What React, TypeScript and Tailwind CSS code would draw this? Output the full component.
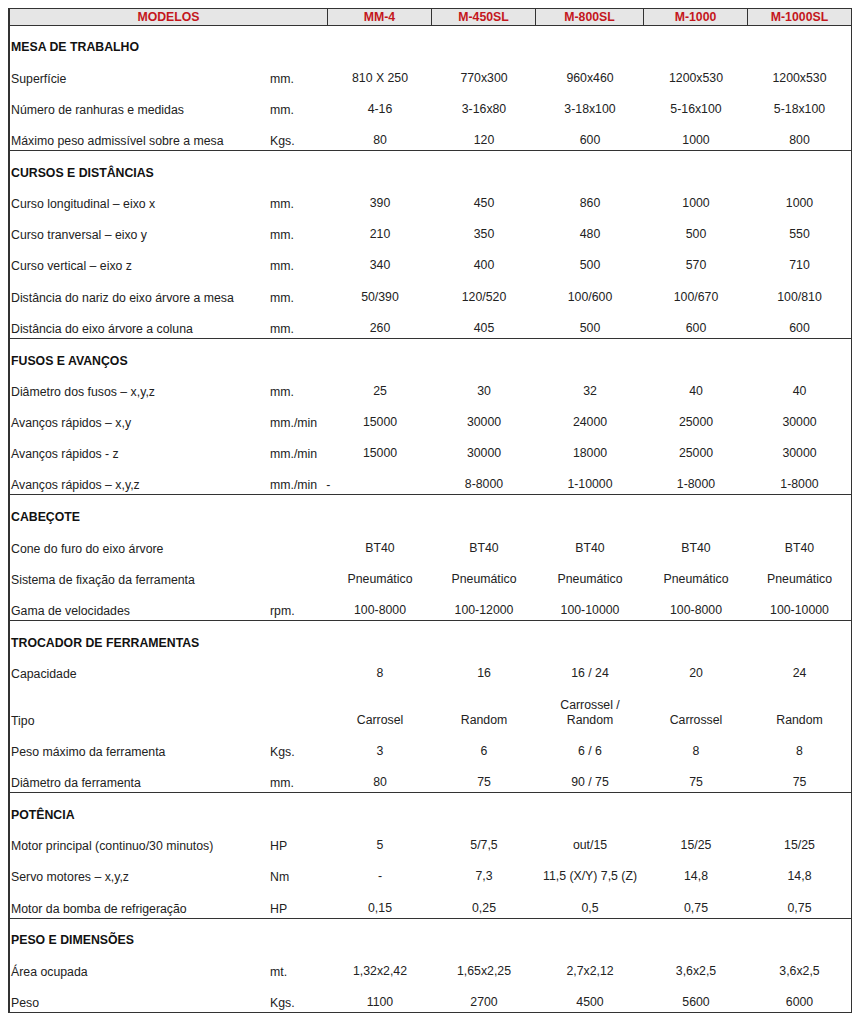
import { FC } from "react";

type Row = { label: string; unit: string; values: string[]; tall?: boolean; dash?: boolean };
type Section = { title: string; rows: Row[] };

const models = ["MM-4", "M-450SL", "M-800SL", "M-1000", "M-1000SL"];

const sections: Section[] = [
  {
    title: "MESA DE TRABALHO",
    rows: [
      { label: "Superfície", unit: "mm.", values: ["810 X 250", "770x300", "960x460", "1200x530", "1200x530"] },
      { label: "Número de ranhuras e medidas", unit: "mm.", values: ["4-16", "3-16x80", "3-18x100", "5-16x100", "5-18x100"] },
      { label: "Máximo peso admissível sobre a mesa", unit: "Kgs.", values: ["80", "120", "600", "1000", "800"] },
    ],
  },
  {
    title: "CURSOS E DISTÂNCIAS",
    rows: [
      { label: "Curso longitudinal – eixo x", unit: "mm.", values: ["390", "450", "860", "1000", "1000"] },
      { label: "Curso tranversal – eixo y", unit: "mm.", values: ["210", "350", "480", "500", "550"] },
      { label: "Curso vertical – eixo z", unit: "mm.", values: ["340", "400", "500", "570", "710"] },
      { label: "Distância do nariz do eixo árvore a mesa", unit: "mm.", values: ["50/390", "120/520", "100/600", "100/670", "100/810"] },
      { label: "Distância do eixo árvore a coluna", unit: "mm.", values: ["260", "405", "500", "600", "600"] },
    ],
  },
  {
    title: "FUSOS E AVANÇOS",
    rows: [
      { label: "Diâmetro dos fusos – x,y,z", unit: "mm.", values: ["25", "30", "32", "40", "40"] },
      { label: "Avanços rápidos – x,y", unit: "mm./min", values: ["15000", "30000", "24000", "25000", "30000"] },
      { label: "Avanços rápidos - z", unit: "mm./min", values: ["15000", "30000", "18000", "25000", "30000"] },
      { label: "Avanços rápidos – x,y,z", unit: "mm./min", dash: true, values: ["", "8-8000", "1-10000", "1-8000", "1-8000"] },
    ],
  },
  {
    title: "CABEÇOTE",
    rows: [
      { label: "Cone do furo do eixo árvore", unit: "", values: ["BT40", "BT40", "BT40", "BT40", "BT40"] },
      { label: "Sistema de fixação da ferramenta", unit: "", values: ["Pneumático", "Pneumático", "Pneumático", "Pneumático", "Pneumático"] },
      { label: "Gama de velocidades", unit: "rpm.", values: ["100-8000", "100-12000", "100-10000", "100-8000", "100-10000"] },
    ],
  },
  {
    title: "TROCADOR DE FERRAMENTAS",
    rows: [
      { label: "Capacidade", unit: "", values: ["8", "16", "16 / 24", "20", "24"] },
      { label: "Tipo", unit: "", tall: true, values: ["Carrosel", "Random", "Carrossel /\nRandom", "Carrossel", "Random"] },
      { label: "Peso máximo da ferramenta", unit: "Kgs.", values: ["3", "6", "6 / 6", "8", "8"] },
      { label: "Diâmetro da ferramenta", unit: "mm.", values: ["80", "75", "90 / 75", "75", "75"] },
    ],
  },
  {
    title: "POTÊNCIA",
    rows: [
      { label: "Motor principal (continuo/30 minutos)", unit: "HP", values: ["5", "5/7,5", "out/15", "15/25", "15/25"] },
      { label: "Servo motores – x,y,z", unit: "Nm", values: ["-", "7,3", "11,5 (X/Y) 7,5 (Z)", "14,8", "14,8"] },
      { label: "Motor da bomba de refrigeração", unit: "HP", values: ["0,15", "0,25", "0,5", "0,75", "0,75"] },
    ],
  },
  {
    title: "PESO E DIMENSÕES",
    rows: [
      { label: "Área ocupada", unit: "mt.", values: ["1,32x2,42", "1,65x2,25", "2,7x2,12", "3,6x2,5", "3,6x2,5"] },
      { label: "Peso", unit: "Kgs.", values: ["1100", "2700", "4500", "5600", "6000"] },
    ],
  },
];

const cols = "grid grid-cols-[260px_58px_104px_104px_108px_104px_1fr]";

const App: FC = () => {
  return (
    <div
      className="min-h-[1024px] bg-white pt-2 pl-2 text-[12.3px] leading-[14px] text-[#222]"
      style={{ fontFamily: '"Liberation Sans", Arial, sans-serif' }}
    >
      <div className="w-[844px] border-t border-r border-l-2 border-[#333]">
        {/* Header */}
        <div className="grid grid-cols-[318px_104px_104px_108px_104px_1fr] h-[16.5px] bg-[#e6e6e6] border-b-[1.5px] border-[#333] font-bold text-[#c4161c]">
          <div className="flex items-center justify-center border-r-[1.5px] border-[#333]">MODELOS</div>
          {models.map((m, i) => (
            <div
              key={m}
              className={`flex items-center justify-center ${i < models.length - 1 ? "border-r-[1.5px] border-[#333]" : ""}`}
            >
              {m}
            </div>
          ))}
        </div>

        {/* Sections */}
        {sections.map((s) => (
          <div key={s.title} className="border-b-[1.5px] border-[#333]">
            <div className="h-[30.9px] flex items-end pb-[2px] pl-[1px] font-bold text-[#111]">{s.title}</div>
            {s.rows.map((r) => (
              <div key={r.label} className={`${cols} ${r.tall ? "h-[46.8px]" : "h-[31.2px]"} items-end pb-[2px]`}>
                <div className="pl-[1px]">{r.label}</div>
                <div>
                  {r.unit}
                  {r.dash && <span className="ml-[9px]">-</span>}
                </div>
                {r.values.map((v, i) => (
                  <div key={i} className="text-center whitespace-pre-line leading-[15px]">
                    {v}
                  </div>
                ))}
              </div>
            ))}
          </div>
        ))}
      </div>
    </div>
  );
};

export default App;
